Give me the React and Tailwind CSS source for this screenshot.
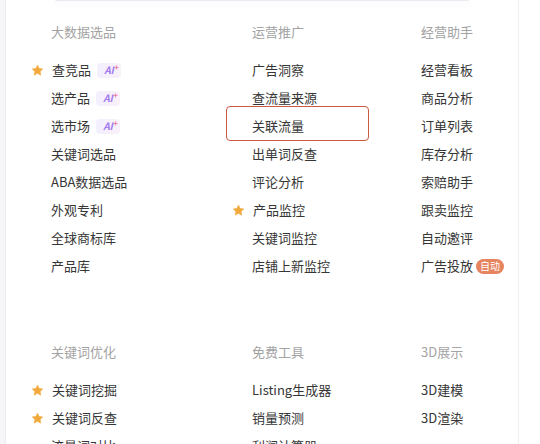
import React from 'react';

const sections = [
	{
		columns: [
			{
				title: '大数据选品',
				items: [
					{ name: '查竞品', star: true, ai: true },
					{ name: '选产品', ai: true },
					{ name: '选市场', ai: true },
					{ name: '关键词选品' },
					{ name: 'ABA数据选品' },
					{ name: '外观专利' },
					{ name: '全球商标库' },
					{ name: '产品库' }
				]
			},
			{
				title: '运营推广',
				items: [
					{ name: '广告洞察' },
					{ name: '查流量来源' },
					{ name: '关联流量', active: true },
					{ name: '出单词反查' },
					{ name: '评论分析' },
					{ name: '产品监控', star: true },
					{ name: '关键词监控' },
					{ name: '店铺上新监控' }
				]
			},
			{
				title: '经营助手',
				items: [
					{ name: '经营看板' },
					{ name: '商品分析' },
					{ name: '订单列表' },
					{ name: '库存分析' },
					{ name: '索赔助手' },
					{ name: '跟卖监控' },
					{ name: '自动邀评' },
					{ name: '广告投放', auto: true }
				]
			}
		]
	},
	{
		columns: [
			{
				title: '关键词优化',
				items: [
					{ name: '关键词挖掘', star: true },
					{ name: '关键词反查', star: true },
					{ name: '流量词对比' }
				]
			},
			{
				title: '免费工具',
				items: [{ name: 'Listing生成器' }, { name: '销量预测' }, { name: '利润计算器' }]
			},
			{
				title: '3D展示',
				items: [{ name: '3D建模' }, { name: '3D渲染' }]
			}
		]
	}
];

function Star() {
	return (
		<svg className="-ml-[20px] mr-[8px] h-[13px] w-[13px] shrink-0" viewBox="0 0 24 24">
			<path
				d="M12 2.2l2.95 6.1 6.65.9-4.85 4.65 1.2 6.65L12 17.3l-5.95 3.2 1.2-6.65L2.4 9.2l6.65-.9z"
				fill="#f2a93b"
				stroke="#f2a93b"
				strokeWidth="1.2"
				strokeLinejoin="round"
			/>
		</svg>
	);
}

function AiBadge() {
	return (
		<span className="relative ml-[6px] flex h-[15px] w-[24px] items-center justify-center rounded-[4px] bg-gradient-to-r from-[#f3effd] to-[#f9f1fa]">
			<span className="text-[10px] font-bold italic leading-none text-[#a27af0]">AI</span>
			<span className="absolute right-[2px] top-[0px] text-[8px] font-bold leading-none text-[#ee7aa4]">+</span>
		</span>
	);
}

function AutoBadge() {
	return (
		<span className="ml-[3px] flex h-[15px] items-center rounded-full bg-[#e5845f] px-[4px] text-[10px] leading-none text-white">
			自动
		</span>
	);
}

function Item({ item }) {
	return (
		<div className="relative flex h-[28px] items-center text-[13px] text-[#363636]">
			{item.active && (
				<div className="absolute -left-[26px] top-[-6px] h-[35px] w-[143px] rounded-[4px] border-[1.5px] border-[#c85a43]" />
			)}
			{item.star && <Star />}
			<span>{item.name}</span>
			{item.ai && <AiBadge />}
			{item.auto && <AutoBadge />}
		</div>
	);
}

function Column({ column, width }) {
	return (
		<div className={width}>
			<div className="flex h-[20px] items-center text-[13px] text-[#a3a3a3]">{column.title}</div>
			<div className="mt-[14px]">
				{column.items.map((item) => (
					<Item key={item.name} item={item} />
				))}
			</div>
		</div>
	);
}

export default function App() {
	const widths = ['w-[201px]', 'w-[169px]', 'flex-1'];
	return (
		<div
			className="flex h-[444px] w-[540px] overflow-hidden bg-white"
			style={{ fontFamily: '"Noto Sans CJK SC", "Noto Sans", sans-serif' }}
		>
			<div className="w-[6px] shrink-0 border-r border-[#ececef] bg-[#f6f6f8]" />
			<div className="relative flex w-[513px] shrink-0 flex-col border-r border-[#efeff1]">
				<div className="mx-[49px] h-[5px] rounded-b-[10px] border-b border-[#ede9f3] bg-gradient-to-r from-[#f4f1fe] via-[#fdf1f3] to-[#fdf8ec] shadow-[0_2px_6px_rgba(180,170,200,0.25)]" />
				<div className="pl-[45px] pt-[21px]">
					{sections.map((section, i) => (
						<div key={i} className={i === 0 ? 'flex' : 'mt-[62px] flex'}>
							{section.columns.map((column, j) => (
								<Column key={column.title} column={column} width={widths[j]} />
							))}
						</div>
					))}
				</div>
			</div>
			<div className="flex-1 bg-white" />
		</div>
	);
}
